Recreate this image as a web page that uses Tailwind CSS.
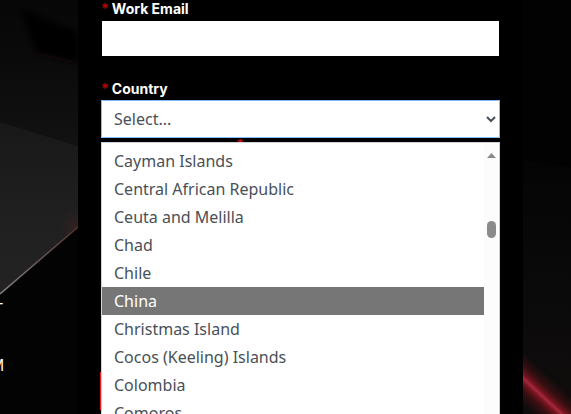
<!DOCTYPE html>
<html lang="en">
<head>
<meta charset="utf-8">
<meta name="viewport" content="width=device-width, initial-scale=1">
<title>Contact form</title>
<script src="https://cdn.jsdelivr.net/npm/@tailwindcss/browser@4"></script>
</head>
<body class="bg-black">
<main class="flex h-screen overflow-hidden bg-black font-['Noto_Sans','Open_Sans',sans-serif]">
  <aside class="relative w-[78px] shrink-0 overflow-hidden bg-[#030303]">
    <svg class="absolute inset-0" width="78" height="414" viewBox="0 0 78 414" aria-hidden="true">
      <defs>
        <linearGradient id="top" x1="0" y1="0" x2="0" y2="1"><stop offset="0" stop-color="#070708"/><stop offset=".4" stop-color="#0a0a0a"/><stop offset="1" stop-color="#121212"/></linearGradient>
        <linearGradient id="plane" x1="0" y1="0" x2="0" y2="1"><stop offset="0" stop-color="#181818"/><stop offset=".5" stop-color="#1f1f20"/><stop offset="1" stop-color="#232324"/></linearGradient>
        <linearGradient id="edge" x1="0" y1="1" x2="1" y2="0"><stop offset="0" stop-color="#8b8583"/><stop offset=".5" stop-color="#655856"/><stop offset="1" stop-color="#54302c"/></linearGradient>
        <radialGradient id="warm" cx="78" cy="226" r="18" gradientUnits="userSpaceOnUse"><stop stop-color="#602020" stop-opacity=".3"/><stop offset="1" stop-color="#602020" stop-opacity="0"/></radialGradient>
        <filter id="soft" x="-20%" y="-20%" width="140%" height="140%"><feGaussianBlur stdDeviation="3"/></filter>
      </defs>
      <path d="M0 0H78V146L0 122Z" fill="url(#top)"/>
      <path d="M20 8L78 32V63L36 53Z" fill="#060505" filter="url(#soft)"/>
      <path d="M38 54L78 63" stroke="#100807" stroke-width="2"/>
      <path d="M0 122L78 146V227L0 294Z" fill="url(#plane)"/>
      <path d="M0 122L78 146V227L0 294Z" fill="url(#warm)"/>
      <path d="M0 294L78 227" stroke="url(#edge)" stroke-width="1.5"/>
    </svg>
    <div class="relative flex w-1 flex-col items-end gap-8 pt-[298px] text-base leading-6 text-white font-['Liberation_Sans',sans-serif]">
      <span class="pr-px">T</span>
      <span>M</span>
    </div>
  </aside>

  <form class="relative min-w-0 flex-1 bg-black px-[23px]">
    <label for="email" class="flex h-[21px] gap-[3px] text-sm leading-[18px] font-bold text-white font-['Inter',sans-serif]"><span class="text-[#c00000]">*</span>Work Email</label>
    <input id="email" type="email" class="mx-px block h-[35px] w-[calc(100%-2px)] bg-white px-3 text-base text-[#495057] outline-none">
    <label for="country" class="mt-6 flex h-5 gap-[3px] text-sm leading-[18px] font-bold text-white font-['Inter',sans-serif]"><span class="text-[#c00000]">*</span>Country</label>
    <div class="relative">
      <select id="country" class="block h-[38px] w-full appearance-none border border-[#80bdff] bg-white px-3 text-base text-[#495057] outline-none"><option>Select...</option></select>
      <svg class="pointer-events-none absolute top-4 right-1" width="10" height="7" viewBox="0 0 10 7" fill="none" stroke="#495057" stroke-width="2" aria-hidden="true"><path d="M1 1L5 5L9 1"/></svg>
      <div class="absolute inset-x-0 top-full mt-1 flex h-[300px] overflow-hidden border border-[#ced4da] bg-white">
        <ul role="listbox" aria-label="Country" class="min-w-0 flex-1 pt-1 text-base leading-7 text-[#495057]">
          <li role="option" class="px-3">Cayman Islands</li>
          <li role="option" class="px-3">Central African Republic</li>
          <li role="option" class="px-3">Ceuta and Melilla</li>
          <li role="option" class="px-3">Chad</li>
          <li role="option" class="px-3">Chile</li>
          <li role="option" aria-selected="true" class="bg-[#767676] px-3 text-white">China</li>
          <li role="option" class="px-3">Christmas Island</li>
          <li role="option" class="px-3">Cocos (Keeling) Islands</li>
          <li role="option" class="px-3">Colombia</li>
          <li role="option" class="px-3">Comoros</li>
        </ul>
        <div class="flex w-[15px] flex-col items-center bg-[#fcfcfc] pt-[10px]" aria-hidden="true">
          <svg width="9" height="5" viewBox="0 0 9 5"><path d="M4.5 0L9 5H0Z" fill="#8b8b8b"/></svg>
          <div class="mt-[63px] h-[17px] w-[9px] rounded-full bg-[#8b8b8b]"></div>
        </div>
      </div>
    </div>
    <p class="flex h-[234px] pl-[135px] text-sm leading-3.5 font-bold text-[#d01008] font-['Inter',sans-serif]">*</p>
    <button type="button" aria-label="Submit" class="-mx-px block h-[38px] w-[calc(100%+1px)] bg-[#f01818]"></button>
  </form>

  <aside class="w-12 shrink-0 overflow-hidden bg-[#020202]">
    <svg width="48" height="414" viewBox="0 0 48 414" aria-hidden="true">
      <defs>
        <linearGradient id="right" x1="0" y1="0" x2="0" y2="1"><stop offset="0" stop-color="#040404"/><stop offset=".5" stop-color="#0a0a0a"/><stop offset="1" stop-color="#100c0c"/></linearGradient>
        <linearGradient id="beam" x1="29" y1="379" x2="3" y2="407" gradientUnits="userSpaceOnUse"><stop stop-color="#70141a" stop-opacity="0"/><stop offset=".25" stop-color="#70141a" stop-opacity=".4"/><stop offset=".42" stop-color="#801520" stop-opacity=".9"/><stop offset=".5" stop-color="#a62840"/><stop offset=".58" stop-color="#801520" stop-opacity=".9"/><stop offset=".75" stop-color="#70141a" stop-opacity=".4"/><stop offset="1" stop-color="#70141a" stop-opacity="0"/></linearGradient>
      </defs>
      <path d="M0 160L48 168V414H0Z" fill="url(#right)"/>
      <path d="M0 340H48V414H0Z" fill="url(#beam)"/>
    </svg>
  </aside>
</main>
</body>
</html>
